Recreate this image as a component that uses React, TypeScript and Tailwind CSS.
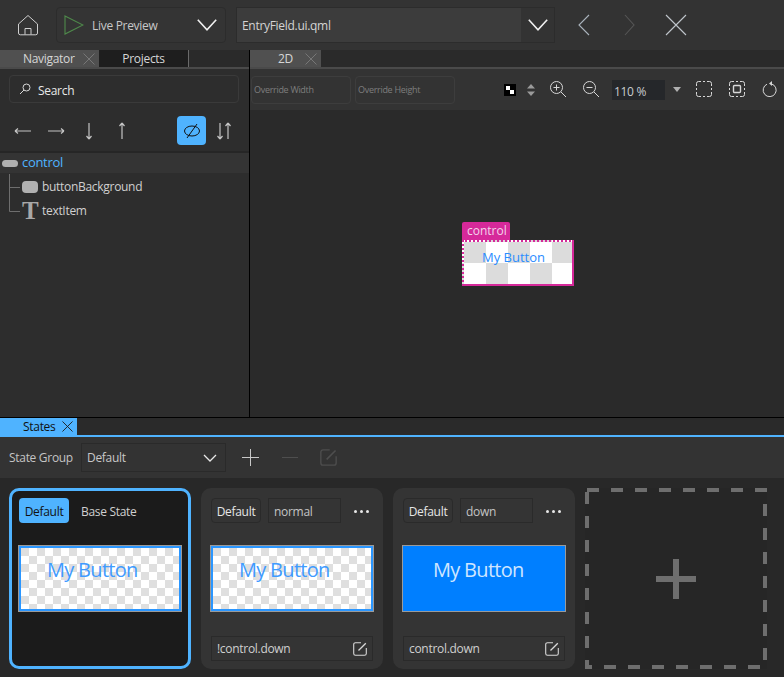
function Chevron({ className = "" }: { className?: string }) {
  return (
    <svg width="20" height="12" viewBox="0 0 20 12" fill="none" className={className}>
      <path d="M.8.8 10 10.800 19.200.8" stroke="#f0f0f0" strokeWidth="1.600" />
    </svg>
  );
}

function CloseX({ size, color = "#777777", className = "" }: { size: number; color?: string; className?: string }) {
  return (
    <svg width={size} height={size} viewBox="0 0 12 12" fill="none" className={className}>
      <path d="M.5.5l11 11M11.500.5l-11 11" stroke={color} strokeWidth="1" />
    </svg>
  );
}

function EditIcon({ color = "#d8d8d8", size = 14 }: { color?: string; size?: number }) {
  return (
    <svg width={size} height={size} viewBox="0 0 14 14" fill="none">
      <path d="M8 .7H2.500A1.800 1.800 0 0 0 .7 2.500v9a1.800 1.800 0 0 0 1.800 1.800h9a1.800 1.800 0 0 0 1.800-1.800V6" stroke={color} strokeWidth="1.100" />
      <path d="M5.500 8.500 12.800 1.200" stroke={color} strokeWidth="1.300" />
    </svg>
  );
}

function ArrowBtn({ d }: { d: string }) {
  return (
    <svg width="20" height="20" viewBox="0 0 20 20" fill="none">
      <path d={d} stroke="#c4c4c4" strokeWidth="1.200" />
    </svg>
  );
}

function ButtonPreview({ down }: { down?: boolean }) {
  return (
    <div className={`w-[164px] h-[67px] border border-[#9a9a9a] ml-[-1px] ${down ? "bg-[#007fff]" : ""}`}>
      <div
        className={`w-full h-full text-[20px] tracking-[-0.7px] leading-[30px] ${
          down
            ? "pl-[30px] pt-[9px] text-[#cfe6ff]"
            : "pl-[26px] pt-[7px] text-[#3f9bff] border-2 border-[#2a96ff] bg-[repeating-conic-gradient(#ffffff_0_25%,#dfdfdf_0_50%)] bg-[length:16px_16px]"
        }`}
      >
        My Button
      </div>
    </div>
  );
}

function StateHeader({ name }: { name: string }) {
  return (
    <div className="flex items-center h-[25px]">
      <div className="w-[50px] h-[25px] pt-[2px] rounded-[4px] border border-[#2a2a2a] flex items-center justify-center text-[#e6e6e6]">Default</div>
      <div className="ml-[7px] w-[73px] h-[25px] pt-[2px] border border-[#2a2a2a] bg-[#343434] pl-[5px] flex items-center text-[#c4c4c4]">{name}</div>
      <div className="ml-[13px] mt-[1px] flex gap-[3px]">
        <span className="w-[3px] h-[3px] rounded-full bg-[#e8e8e8]" />
        <span className="w-[3px] h-[3px] rounded-full bg-[#e8e8e8]" />
        <span className="w-[3px] h-[3px] rounded-full bg-[#e8e8e8]" />
      </div>
    </div>
  );
}

function StateCard({ name, when, down }: { name: string; when: string; down?: boolean }) {
  return (
    <div className="w-[182px] h-[181px] rounded-[10px] bg-[#343434] pt-[10px] pl-[10px]">
      <StateHeader name={name} />
      <div className="mt-[22px]">
        <ButtonPreview down={down} />
      </div>
      <div className="mt-[24px] w-[162px] h-[25px] border border-[#2a2a2a] flex items-center justify-between pl-[5px] pr-[5px] text-[#d0d0d0]">
        <span>{when}</span>
        <EditIcon />
      </div>
    </div>
  );
}

export default function App() {
  return (
    <div className="w-[784px] h-[677px] overflow-hidden flex flex-col bg-[#2a2a2a] text-[12px] tracking-[-0.3px] text-[#d8d8d8] font-['Open_Sans','Noto_Sans',sans-serif]">
      {/* top bar */}
      <div className="h-[50px] shrink-0 bg-[#333333] flex items-center">
        <svg width="22" height="22" viewBox="0 0 22 22" fill="none" className="ml-[17px]">
          <path d="M1.500 10 11 1.500 20.500 10v9a1.800 1.800 0 0 1-1.800 1.800H3.300A1.800 1.800 0 0 1 1.500 19Z" stroke="#cfcfcf" strokeWidth="1" />
          <path d="M8 20.500V14.500h6v6" stroke="#cfcfcf" strokeWidth="1" />
        </svg>
        <div className="ml-[17px] w-[170px] h-[36px] rounded-[4px] border border-[#2c2c2c] bg-[#343434] flex items-center">
          <svg width="20" height="20" viewBox="0 0 20 20" fill="none" className="ml-[7px]">
            <path d="M1 1 19 10 1 19Z" stroke="#4f8a4b" strokeWidth="1.100" />
          </svg>
          <span className="ml-[8px] pt-[2px] text-[#c8c8c8]">Live Preview</span>
          <Chevron className="ml-auto mr-[8px]" />
        </div>
        <div className="ml-[10px] w-[319px] h-[36px] border border-[#2c2c2c] flex">
          <div className="w-[284px] bg-[#3c3c3c] pl-[5px] pt-[2px] flex items-center text-[#d4d4d4]">EntryField.ui.qml</div>
          <div className="flex-1 flex items-center justify-center">
            <Chevron />
          </div>
        </div>
        <svg width="12" height="22" viewBox="0 0 12 22" fill="none" className="ml-[23px]">
          <path d="M11 1 1 11l10 10" stroke="#aab4bd" strokeWidth="1.100" />
        </svg>
        <svg width="11" height="22" viewBox="0 0 11 22" fill="none" className="ml-[34px]">
          <path d="M1 1l9 10-9 10" stroke="#565656" strokeWidth="1.100" />
        </svg>
        <svg width="22" height="22" viewBox="0 0 22 22" fill="none" className="ml-[30px]">
          <path d="M1 1l20 20M21 1 1 21" stroke="#c0c6cc" strokeWidth="1.100" />
        </svg>
      </div>

      {/* panels */}
      <div className="h-[367px] shrink-0 flex">
        <div className="w-[249px] shrink-0 flex flex-col bg-[#2d2d2d]">
          <div className="h-[19px] shrink-0 flex bg-[#2a2a2a] border-b-2 border-[#4a4a4a]">
            <div className="w-[99px] h-[17px] relative flex items-center pl-[23px] bg-[#505050] text-[#d6d6d6]">
              Navigator
              <CloseX size={12} className="absolute left-[83px] top-[3px]" />
            </div>
            <div className="w-[90px] h-[17px] bg-[#1e1e1e] border-r border-[#6a6a6a] flex items-center justify-center text-[#d6d6d6]">Projects</div>
          </div>
          <div className="mt-[6px] ml-[9px] w-[230px] h-[28px] shrink-0 rounded-[4px] border border-[#3a3a3a] flex items-center pl-[9px] text-[#e8e8e8]">
            <svg width="12" height="12" viewBox="0 0 12 12" fill="none">
              <circle cx="7.500" cy="4.500" r="3.500" stroke="#d8d8d8" strokeWidth="1" />
              <path d="M5 7 1 11" stroke="#d8d8d8" strokeWidth="1" />
            </svg>
            <span className="ml-[7px] pt-[3px]">Search</span>
          </div>
          <div className="mt-[13px] h-[29px] shrink-0 flex items-center pl-[13px]">
            <ArrowBtn d="M2 10h16M2 10l3-2.500M2 10l3 2.500" />
            <div className="ml-[13px]"><ArrowBtn d="M2 10h16M18 10l-3-2.500M18 10l-3 2.500" /></div>
            <div className="ml-[13px]"><ArrowBtn d="M10 2v16M10 18l-2.500-3M10 18l2.500-3" /></div>
            <div className="ml-[13px]"><ArrowBtn d="M10 2v16M10 2 7.500 5M10 2l2.500 3" /></div>
            <div className="ml-[45px] w-[29px] h-[29px] rounded-[4px] bg-[#4fb3ff] flex items-center justify-center">
              <svg width="18" height="16" viewBox="0 0 18 16" fill="none">
                <ellipse cx="9" cy="8" rx="7.500" ry="5" stroke="#111111" strokeWidth="1" />
                <path d="M4 15 14 1" stroke="#111111" strokeWidth="1" />
              </svg>
            </div>
            <div className="ml-[9px]">
              <svg width="18" height="20" viewBox="0 0 18 20" fill="none">
                <path d="M5 2v16M5 18l-2.500-3M5 18l2.500-3M13 18V2M13 2l-2.500 3M13 2l2.500 3" stroke="#c4c4c4" strokeWidth="1.200" />
              </svg>
            </div>
          </div>
          <div className="mt-[6px] h-[2px] shrink-0 bg-[#262626]" />
          <div className="relative flex-1">
            <div className="h-[20px] bg-[#343434] flex items-center pl-[2px]">
              <span className="w-[16px] h-[7px] rounded-[4px] bg-[#b0b0b0]" />
              <span className="ml-[4px] text-[#4fb3ff] text-[13px]">control</span>
            </div>
            <div className="mt-[4px] h-[20px] flex items-center pl-[22px]">
              <span className="w-[16px] h-[12px] rounded-[4px] bg-[#b0b0b0]" />
              <span className="ml-[4px] text-[#d0d0d0]">buttonBackground</span>
            </div>
            <div className="mt-[4px] h-[20px] flex items-center pl-[22px]">
              <span className="w-[16px] text-center font-['Liberation_Serif',serif] font-bold text-[25px] leading-[20px] text-[#a8a8a8]">T</span>
              <span className="ml-[4px] text-[#d0d0d0]">textItem</span>
            </div>
            <svg width="14" height="50" viewBox="0 0 14 50" fill="none" className="absolute left-[8px] top-[21px]">
              <path d="M1.500 0v37.500H12M1.500 13.500H12" stroke="#6e6e6e" strokeWidth="1" />
            </svg>
          </div>
        </div>

        <div className="w-px shrink-0 bg-black" />

        <div className="flex-1 flex flex-col">
          <div className="h-[19px] shrink-0 flex bg-[#2a2a2a] border-b-2 border-[#4a4a4a]">
            <div className="w-[71px] h-[17px] bg-[#505050] relative flex items-center pl-[28px] text-[#d6d6d6]">
              2D
              <CloseX size={12} className="absolute left-[55px] top-[3px]" />
            </div>
          </div>
          <div className="h-[41px] shrink-0 bg-[#333333] flex items-center pl-[1px]">
            <div className="w-[100px] h-[28px] rounded-[4px] border border-[#3d3d3d] flex items-center pl-[2px] text-[9px] text-[#7e7e7e]">Override Width</div>
            <div className="ml-[4px] w-[100px] h-[28px] rounded-[4px] border border-[#3d3d3d] flex items-center pl-[2px] text-[9px] text-[#7e7e7e]">Override Height</div>
            <div className="ml-[49px] w-[12px] h-[12px] bg-black relative">
              <span className="absolute left-[2px] top-[2px] w-[4px] h-[4px] bg-white" />
              <span className="absolute left-[6px] top-[6px] w-[4px] h-[4px] bg-white" />
            </div>
            <svg width="8" height="12" viewBox="0 0 8 12" fill="#9a9a9a" className="ml-[11px]">
              <path d="M4 0 8 4.500H0ZM4 12 0 7.500H8Z" />
            </svg>
            <svg width="18" height="18" viewBox="0 0 18 18" fill="none" className="ml-[14px] mb-[2px]">
              <circle cx="7.500" cy="7.500" r="6" stroke="#d8d8d8" />
              <path d="M12 12l5 5M4.500 7.500h6M7.500 4.500v6" stroke="#d8d8d8" />
            </svg>
            <svg width="18" height="18" viewBox="0 0 18 18" fill="none" className="ml-[15px] mb-[2px]">
              <circle cx="7.500" cy="7.500" r="6" stroke="#d8d8d8" />
              <path d="M12 12l5 5M4.500 7.500h6" stroke="#d8d8d8" />
            </svg>
            <div className="ml-[12px] w-[53px] h-[20px] bg-[#25272a] pl-[2px] text-[12px] leading-[24px] text-[#c8ccd0]">110 %</div>
            <svg width="8" height="5" viewBox="0 0 8 5" fill="#b0b0b0" className="ml-[8px]">
              <path d="M0 0h8L4 5Z" />
            </svg>
            <svg width="16" height="16" viewBox="0 0 16 16" fill="none" className="ml-[15px] mb-[2px]">
              <path d="M5 .5H2.500a2 2 0 0 0-2 2V5M11 .5h2.500a2 2 0 0 1 2 2V5M5 15.500H2.500a2 2 0 0 1-2-2V11M11 15.500h2.500a2 2 0 0 0 2-2V11M7 .5h2M7 15.500h2M.5 7v2M15.500 7v2" stroke="#d8d8d8" />
            </svg>
            <svg width="16" height="16" viewBox="0 0 16 16" fill="none" className="ml-[17px] mb-[2px]">
              <path d="M5 .5H2.500a2 2 0 0 0-2 2V5M11 .5h2.500a2 2 0 0 1 2 2V5M5 15.500H2.500a2 2 0 0 1-2-2V11M11 15.500h2.500a2 2 0 0 0 2-2V11M7 .5h2M7 15.500h2M.5 7v2M15.500 7v2" stroke="#d8d8d8" />
              <rect x="4.500" y="4.500" width="7" height="7" rx="1" stroke="#d8d8d8" strokeWidth="1.400" />
            </svg>
            <svg width="15" height="16" viewBox="0 0 15 16" fill="none" className="ml-[17px] shrink-0 mb-[2px]">
              <path d="M5 3.200a6.500 6.500 0 1 0 4.500-.3" stroke="#d8d8d8" />
              <path d="M10 0v5L7 2.500Z" fill="#d8d8d8" />
            </svg>
          </div>
          <div className="flex-1 pl-[212px] pt-[112px]">
            <div className="w-[48px] h-[18px] bg-[#d6299a] rounded-t-[2px] text-[12px] tracking-normal leading-[18px] pl-[5px] text-[#f3d5ea]">control</div>
            <div className="w-[112px] h-[46px] border-2 border-[#d6299a] [border-top-style:dotted] [border-left-style:dotted] text-[13px] tracking-normal pl-[18px] pt-[5px] leading-[20px] text-[#2a8cff] bg-[repeating-conic-gradient(#ffffff_0_25%,#dcdcdc_0_50%)] bg-[length:44px_42px]">
              My Button
            </div>
          </div>
        </div>
      </div>

      <div className="h-px shrink-0 bg-black" />

      {/* states */}
      <div className="h-[17px] shrink-0 bg-[#2a2a2a] flex">
        <div className="w-[77px] bg-[#4fb3ff] relative text-[#111111] pl-[23px] flex items-center">
          States
          <CloseX size={11} color="#1f1f1f" className="absolute left-[62px] top-[3px]" />
        </div>
      </div>
      <div className="h-[2px] shrink-0 bg-[#4fb3ff]" />
      <div className="h-[41px] shrink-0 bg-[#333333] flex items-center pl-[9px]">
        <span className="w-[63px] pt-[1px] whitespace-nowrap text-[#c4c4c4]">State Group</span>
        <div className="ml-[9px] w-[145px] h-[29px] border border-[#2a2a2a] flex items-center justify-between pl-[5px] pr-[8px] pt-[1px] text-[#c8c8c8]">
          Default
          <svg width="14" height="8" viewBox="0 0 14 8" fill="none">
            <path d="M1 1l6 6 6-6" stroke="#e8e8e8" strokeWidth="1.300" />
          </svg>
        </div>
        <svg width="17" height="17" viewBox="0 0 17 17" fill="none" className="ml-[16px]">
          <path d="M0 8.500h17M8.500 0v17" stroke="#c8c8c8" strokeWidth="1" />
        </svg>
        <svg width="16" height="17" viewBox="0 0 16 17" fill="none" className="ml-[23px]">
          <path d="M0 8.500h16" stroke="#4e4e4e" strokeWidth="1" />
        </svg>
        <div className="ml-[22px]">
          <EditIcon color="#4e4e4e" size={17} />
        </div>
      </div>
      <div className="flex-1 bg-[#282828] pt-[10px] pl-[9px] flex gap-[10px]">
        <div className="w-[182px] h-[181px] rounded-[10px] bg-[#1b1b1b] border-[3px] border-[#4fb3ff] pt-[7px] pl-[7px]">
          <div className="flex items-center h-[25px]">
            <div className="w-[50px] h-[25px] pt-[2px] rounded-[4px] bg-[#4fb3ff] flex items-center justify-center text-[#111111]">Default</div>
            <span className="ml-[12px] pt-[2px] text-[#d0d0d0]">Base State</span>
          </div>
          <div className="mt-[22px]">
            <ButtonPreview />
          </div>
        </div>
        <StateCard name="normal" when="!control.down" />
        <StateCard name="down" when="control.down" down />
        <div className="relative w-[182px] h-[181px] bg-[#262626] flex items-center justify-center">
          <svg width="182" height="181" viewBox="0 0 182 181" fill="none" className="absolute inset-0">
            <rect x="2" y="2" width="178" height="177" stroke="#6e6e6e" strokeWidth="4" strokeDasharray="12 12" />
          </svg>
          <div className="relative w-[40px] h-[40px] flex items-center justify-center">
            <span className="absolute w-[40px] h-[6px] bg-[#6e6e6e]" />
            <span className="absolute w-[6px] h-[40px] bg-[#6e6e6e]" />
          </div>
        </div>
      </div>
    </div>
  );
}
